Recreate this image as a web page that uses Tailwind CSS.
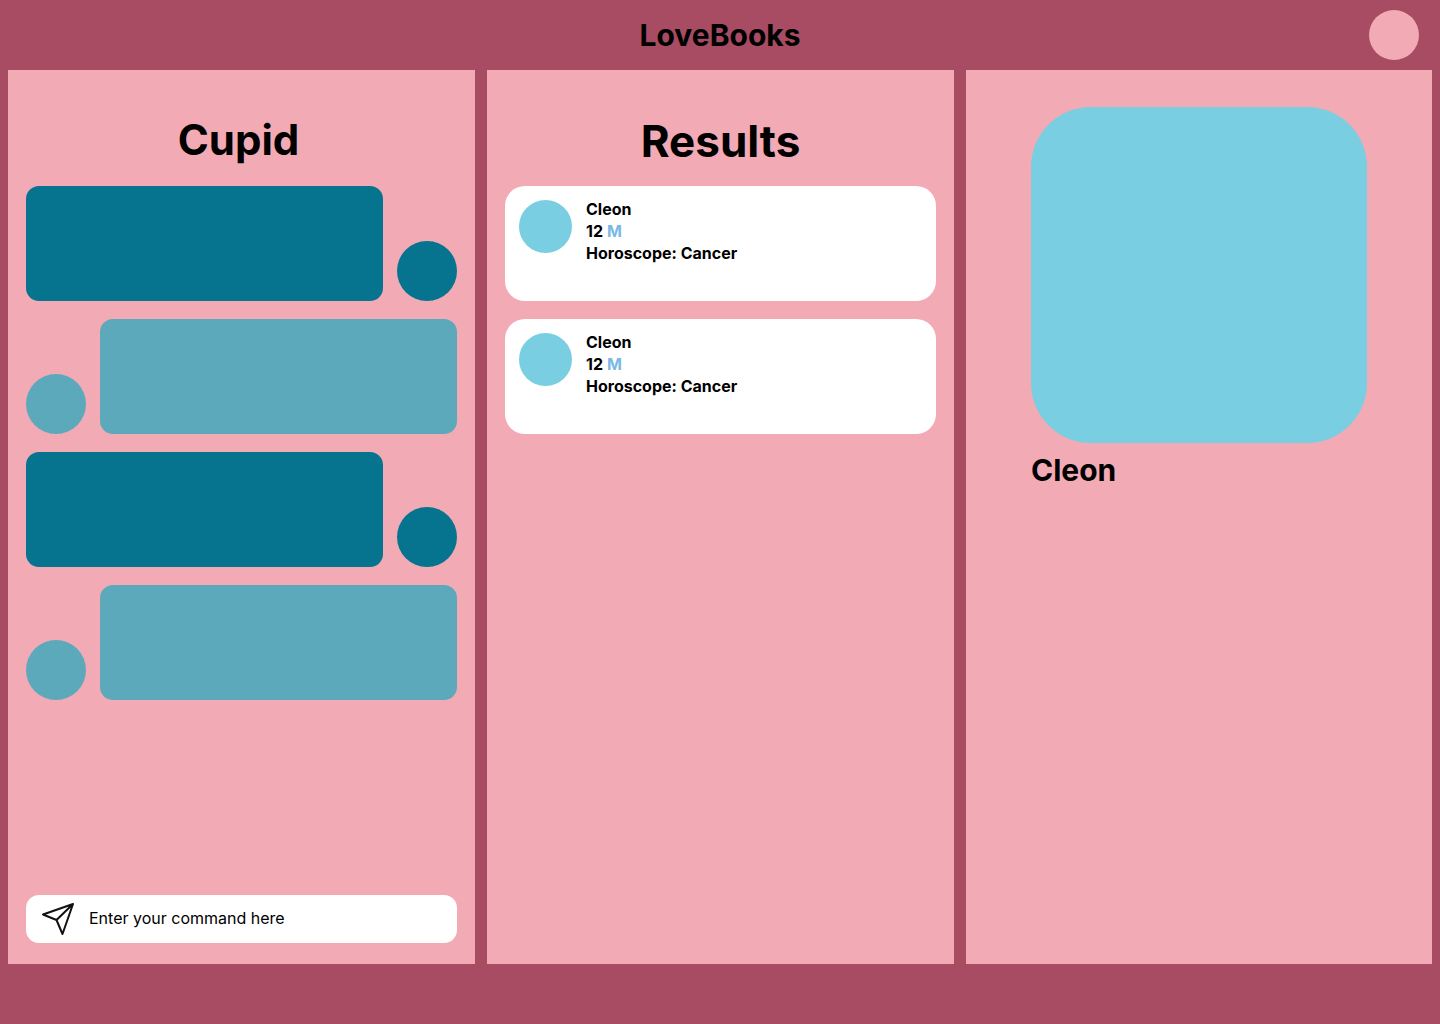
<!DOCTYPE html>
<html lang="en">
<head>
<meta charset="utf-8">
<meta name="viewport" content="width=device-width, initial-scale=1">
<title>LoveBooks</title>
<script src="https://cdn.jsdelivr.net/npm/@tailwindcss/browser@4"></script>
</head>
<body class="flex min-h-screen flex-col bg-[#a74c62] font-['Inter',sans-serif] text-black">
<header class="grid h-[70px] grid-cols-[1fr_auto_1fr] items-center px-5">
  <h1 class="col-start-2 text-[30px] leading-9 font-bold">LoveBooks</h1>
  <button type="button" aria-label="Profile" class="mr-px size-[50px] justify-self-end rounded-full bg-[#f2aab5]"></button>
</header>

<main class="grid grow grid-cols-[467fr_467fr_466fr] gap-3 px-2 pb-[60px]">
  <section class="flex flex-col bg-[#f2aab5] px-[18px] pt-11 pb-[21px]">
    <h2 class="pr-1.5 text-center text-[42px] leading-[52px] font-bold">Cupid</h2>
    <ul class="mt-5 flex flex-col gap-[18px]">
      <li class="flex items-end gap-[14px]">
        <div class="h-[115px] grow rounded-[13px] bg-[#06738f]"></div>
        <div class="size-[60px] rounded-full bg-[#06738f]"></div>
      </li>
      <li class="flex flex-row-reverse items-end gap-[14px]">
        <div class="h-[115px] grow rounded-[13px] bg-[#5da9bc]"></div>
        <div class="size-[60px] rounded-full bg-[#5da9bc]"></div>
      </li>
      <li class="flex items-end gap-[14px]">
        <div class="h-[115px] grow rounded-[13px] bg-[#06738f]"></div>
        <div class="size-[60px] rounded-full bg-[#06738f]"></div>
      </li>
      <li class="flex flex-row-reverse items-end gap-[14px]">
        <div class="h-[115px] grow rounded-[13px] bg-[#5da9bc]"></div>
        <div class="size-[60px] rounded-full bg-[#5da9bc]"></div>
      </li>
    </ul>
    <form class="mt-auto flex h-12 items-center gap-[14px] rounded-[13px] bg-white px-[15px]">
      <button type="button" aria-label="Send">
        <svg class="size-[34px]" viewBox="0 0 34 34" fill="none" stroke="#111" stroke-width="2" stroke-linejoin="round" stroke-linecap="round" aria-hidden="true">
          <path d="M32 2 L2 12.5 L15.5 18 L21.5 32 Z M32 2 L15.5 18"/>
        </svg>
      </button>
      <input type="text" aria-label="Command" placeholder="Enter your command here" class="min-w-0 grow bg-transparent pb-0.5 text-base outline-none placeholder:text-black">
    </form>
  </section>

  <section class="bg-[#f2aab5] px-[18px] pt-11">
    <h2 class="text-center text-[44px] leading-[54px] font-bold">Results</h2>
    <ul class="mt-[18px] flex flex-col gap-[18px]">
      <li class="flex h-[115px] gap-[14px] rounded-[20px] bg-white p-[14px]">
        <div class="size-[53px] shrink-0 rounded-full bg-[#79cee2]"></div>
        <div class="-mt-0.5 text-base leading-[22px] font-bold">
          <h3>Cleon</h3>
          <p class="flex gap-1"><span>12</span><span class="text-[#7ab8e6]">M</span></p>
          <p>Horoscope: Cancer</p>
        </div>
      </li>
      <li class="flex h-[115px] gap-[14px] rounded-[20px] bg-white p-[14px]">
        <div class="size-[53px] shrink-0 rounded-full bg-[#79cee2]"></div>
        <div class="-mt-0.5 text-base leading-[22px] font-bold">
          <h3>Cleon</h3>
          <p class="flex gap-1"><span>12</span><span class="text-[#7ab8e6]">M</span></p>
          <p>Horoscope: Cancer</p>
        </div>
      </li>
    </ul>
  </section>

  <section class="bg-[#f2aab5] pt-[37px]">
    <div class="mx-auto w-full max-w-[336px]">
      <div class="aspect-square rounded-[60px] bg-[#79cee2]"></div>
      <h2 class="mt-[9px] text-[30px] leading-9 font-bold">Cleon</h2>
    </div>
  </section>
</main>
</body>
</html>
